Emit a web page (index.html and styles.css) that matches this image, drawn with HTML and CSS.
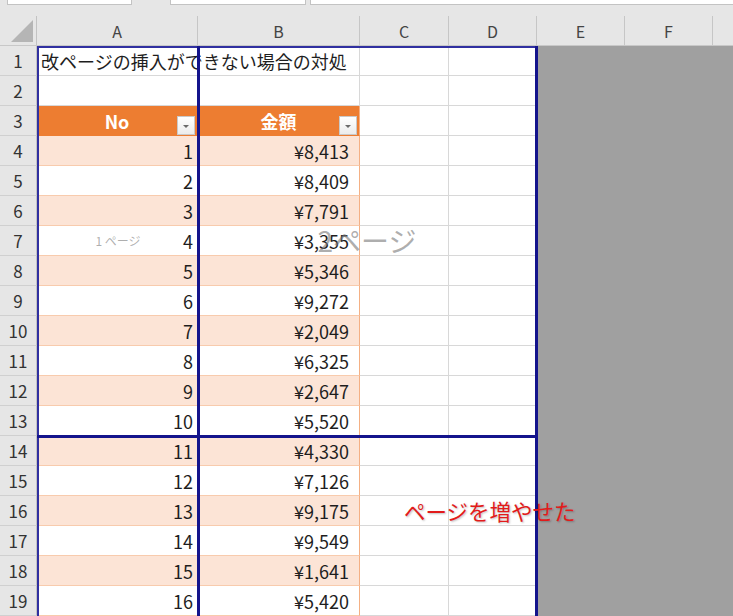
FILE: index.html
```html
<!DOCTYPE html>
<html lang="ja">
<head>
<meta charset="utf-8">
<title>改ページ</title>
<link rel="stylesheet" href="styles.css">
</head>
<body>
<div class="top">
  <div class="box box1"></div>
  <div class="box box2"></div>
  <div class="box box3"></div>
</div>
<div class="colheads">
  <div class="corner"><span class="tri"></span></div>
  <div class="ch w-a">A</div>
  <div class="ch w-b">B</div>
  <div class="ch w-c">C</div>
  <div class="ch w-d">D</div>
  <div class="ch w-e">E</div>
  <div class="ch w-f">F</div>
  <div class="ch w-g"></div>
</div>
<div class="sheet">
  <div class="grid">
    <div class="rh">1</div><div class="c title">改ページの挿入ができない場合の対処</div><div class="c"></div><div class="c"></div><div class="c"></div>
    <div class="rh">2</div><div class="c"></div><div class="c"></div><div class="c"></div><div class="c"></div>
    <div class="rh">3</div><div class="c th">No<span class="dd"></span></div><div class="c th thb">金額<span class="dd"></span></div><div class="c"></div><div class="c"></div>
    <div class="rh">4</div><div class="c n o">1</div><div class="c y o">¥8,413</div><div class="c"></div><div class="c"></div>
    <div class="rh">5</div><div class="c n">2</div><div class="c y">¥8,409</div><div class="c"></div><div class="c"></div>
    <div class="rh">6</div><div class="c n o">3</div><div class="c y o">¥7,791</div><div class="c"></div><div class="c"></div>
    <div class="rh">7</div><div class="c n">4</div><div class="c y">¥3,355</div><div class="c"></div><div class="c"></div>
    <div class="rh">8</div><div class="c n o">5</div><div class="c y o">¥5,346</div><div class="c"></div><div class="c"></div>
    <div class="rh">9</div><div class="c n">6</div><div class="c y">¥9,272</div><div class="c"></div><div class="c"></div>
    <div class="rh">10</div><div class="c n o">7</div><div class="c y o">¥2,049</div><div class="c"></div><div class="c"></div>
    <div class="rh">11</div><div class="c n">8</div><div class="c y">¥6,325</div><div class="c"></div><div class="c"></div>
    <div class="rh">12</div><div class="c n o">9</div><div class="c y o">¥2,647</div><div class="c"></div><div class="c"></div>
    <div class="rh">13</div><div class="c n">10</div><div class="c y">¥5,520</div><div class="c"></div><div class="c"></div>
    <div class="rh">14</div><div class="c n o">11</div><div class="c y o">¥4,330</div><div class="c"></div><div class="c"></div>
    <div class="rh">15</div><div class="c n">12</div><div class="c y">¥7,126</div><div class="c"></div><div class="c"></div>
    <div class="rh">16</div><div class="c n o">13</div><div class="c y o">¥9,175</div><div class="c"></div><div class="c"></div>
    <div class="rh">17</div><div class="c n">14</div><div class="c y">¥9,549</div><div class="c"></div><div class="c"></div>
    <div class="rh">18</div><div class="c n o">15</div><div class="c y o">¥1,641</div><div class="c"></div><div class="c"></div>
    <div class="rh">19</div><div class="c n">16</div><div class="c y">¥5,420</div><div class="c"></div><div class="c"></div>
  </div>
  <div class="outside"></div>

  <div class="wm wm1">1 ページ</div>
  <div class="wm wm2">2ページ</div>

  <div class="pb pb-left"></div>
  <div class="pb pb-top"></div>
  <div class="pb pb-ab"></div>
  <div class="pb pb-right"></div>
  <div class="pb pb-h"></div>

  <div class="note">ページを増やせた</div>
</div>
</body>
</html>
```

FILE: styles.css
```css
* { box-sizing: border-box; }
html, body {
  margin: 0;
  padding: 0;
  width: 733px;
  height: 616px;
  overflow: hidden;
  background: #e6e6e6;
  font-family: "Noto Sans CJK JP", "Noto Sans", sans-serif;
  color: #1e1e1e;
}

/* formula / name box strip */
.top {
  height: 16px;
  display: flex;
  align-items: flex-start;
}
.box {
  height: 5px;
  background: #fff;
  border: 1px solid #c3c3c3;
  border-top: none;
}
.box1 { margin-left: 7px; width: 125px; }
.box2 { margin-left: 38px; width: 136px; }
.box3 { margin-left: 4px; flex: 1; border-right: none; }

/* column headers */
.colheads {
  height: 30px;
  display: flex;
  border-bottom: 1px solid #c8c8c8;
}
.corner {
  width: 37px;
  border-right: 1px solid #c3c3c3;
  position: relative;
}
.tri {
  position: absolute;
  right: 3px;
  bottom: 3px;
  width: 0;
  height: 0;
  border-left: 22px solid transparent;
  border-bottom: 22px solid #b5b5b5;
}
.ch {
  border-right: 1px solid #c6c6c6;
  display: flex;
  align-items: center;
  justify-content: center;
  font-size: 16px;
  color: #444;
  line-height: 1;
  padding-top: 1px;
}
.w-a { width: 161px; }
.w-b { width: 162px; }
.w-c { width: 89px; }
.w-d { width: 88px; }
.w-e { width: 88px; }
.w-f { width: 88px; }
.w-g { flex: 1; border-right: none; }

/* sheet body */
.sheet {
  position: relative;
  display: flex;
  height: 570px;
  overflow: hidden;
}
.grid {
  display: grid;
  grid-template-columns: 37px 161px 162px 89px 88px;
  grid-auto-rows: 30px;
  background: #fff;
}
.outside {
  flex: 1;
  background: #a0a0a0;
}
.rh {
  background: #e6e6e6;
  border-right: 1px solid #c3c3c3;
  border-bottom: 1px solid #d0d0d0;
  display: flex;
  align-items: center;
  justify-content: center;
  font-size: 17px;
  color: #333;
  line-height: 1;
}
.c {
  border-right: 1px solid #d8d8d8;
  border-bottom: 1px solid #d8d8d8;
  display: flex;
  align-items: center;
  font-size: 18px;
  line-height: 1;
  white-space: nowrap;
}
.title {
  padding-left: 4px;
  overflow: visible;
  position: relative;
  z-index: 1;
}
.th {
  background: #ed7d31;
  border-color: #ed7d31;
  color: #fff;
  font-weight: bold;
  justify-content: center;
  position: relative;
}
.thb { border-right-color: #f4b084; }
.dd {
  position: absolute;
  right: 2px;
  top: 10px;
  width: 18px;
  height: 19px;
  background: linear-gradient(#ffffff, #ececec);
  border: 1px solid #c9c9c9;
}
.dd::after {
  content: "";
  position: absolute;
  left: 5px;
  top: 8px;
  border-left: 3px solid transparent;
  border-right: 3px solid transparent;
  border-top: 3px solid #6a6a6a;
}
.n, .y {
  justify-content: flex-end;
  border-bottom-color: #f8cbad;
}
.n { padding-right: 4px; }
.y { padding-right: 10px; border-right-color: #f4b084; }
.o { background: #fce4d6; }

/* page-break preview overlays */
.wm {
  position: absolute;
  transform: translate(-50%, -50%);
  color: rgba(120, 120, 120, 0.6);
  white-space: nowrap;
  line-height: 1;
  z-index: 2;
}
.wm1 { left: 118px; top: 195px; font-size: 12px; }
.wm2 { left: 367px; top: 194px; font-size: 28px; }

.pb {
  position: absolute;
  background: #14148c;
  z-index: 3;
}
.pb-left { left: 37px; top: 0; width: 2px; height: 570px; background: #3030a0; }
.pb-top { left: 37px; top: 0; width: 500px; height: 2px; background: #3030a0; }
.pb-ab { left: 197px; top: 0; width: 3px; height: 570px; }
.pb-right { left: 535px; top: 0; width: 3px; height: 570px; }
.pb-h { left: 37px; top: 389px; width: 501px; height: 3px; }

.note {
  position: absolute;
  left: 404px;
  top: 452px;
  font-size: 21.5px;
  line-height: 1.2;
  color: #e21b1b;
  white-space: nowrap;
  text-shadow: 1px 1px 2px rgba(0, 0, 0, 0.25);
  z-index: 4;
}
```
